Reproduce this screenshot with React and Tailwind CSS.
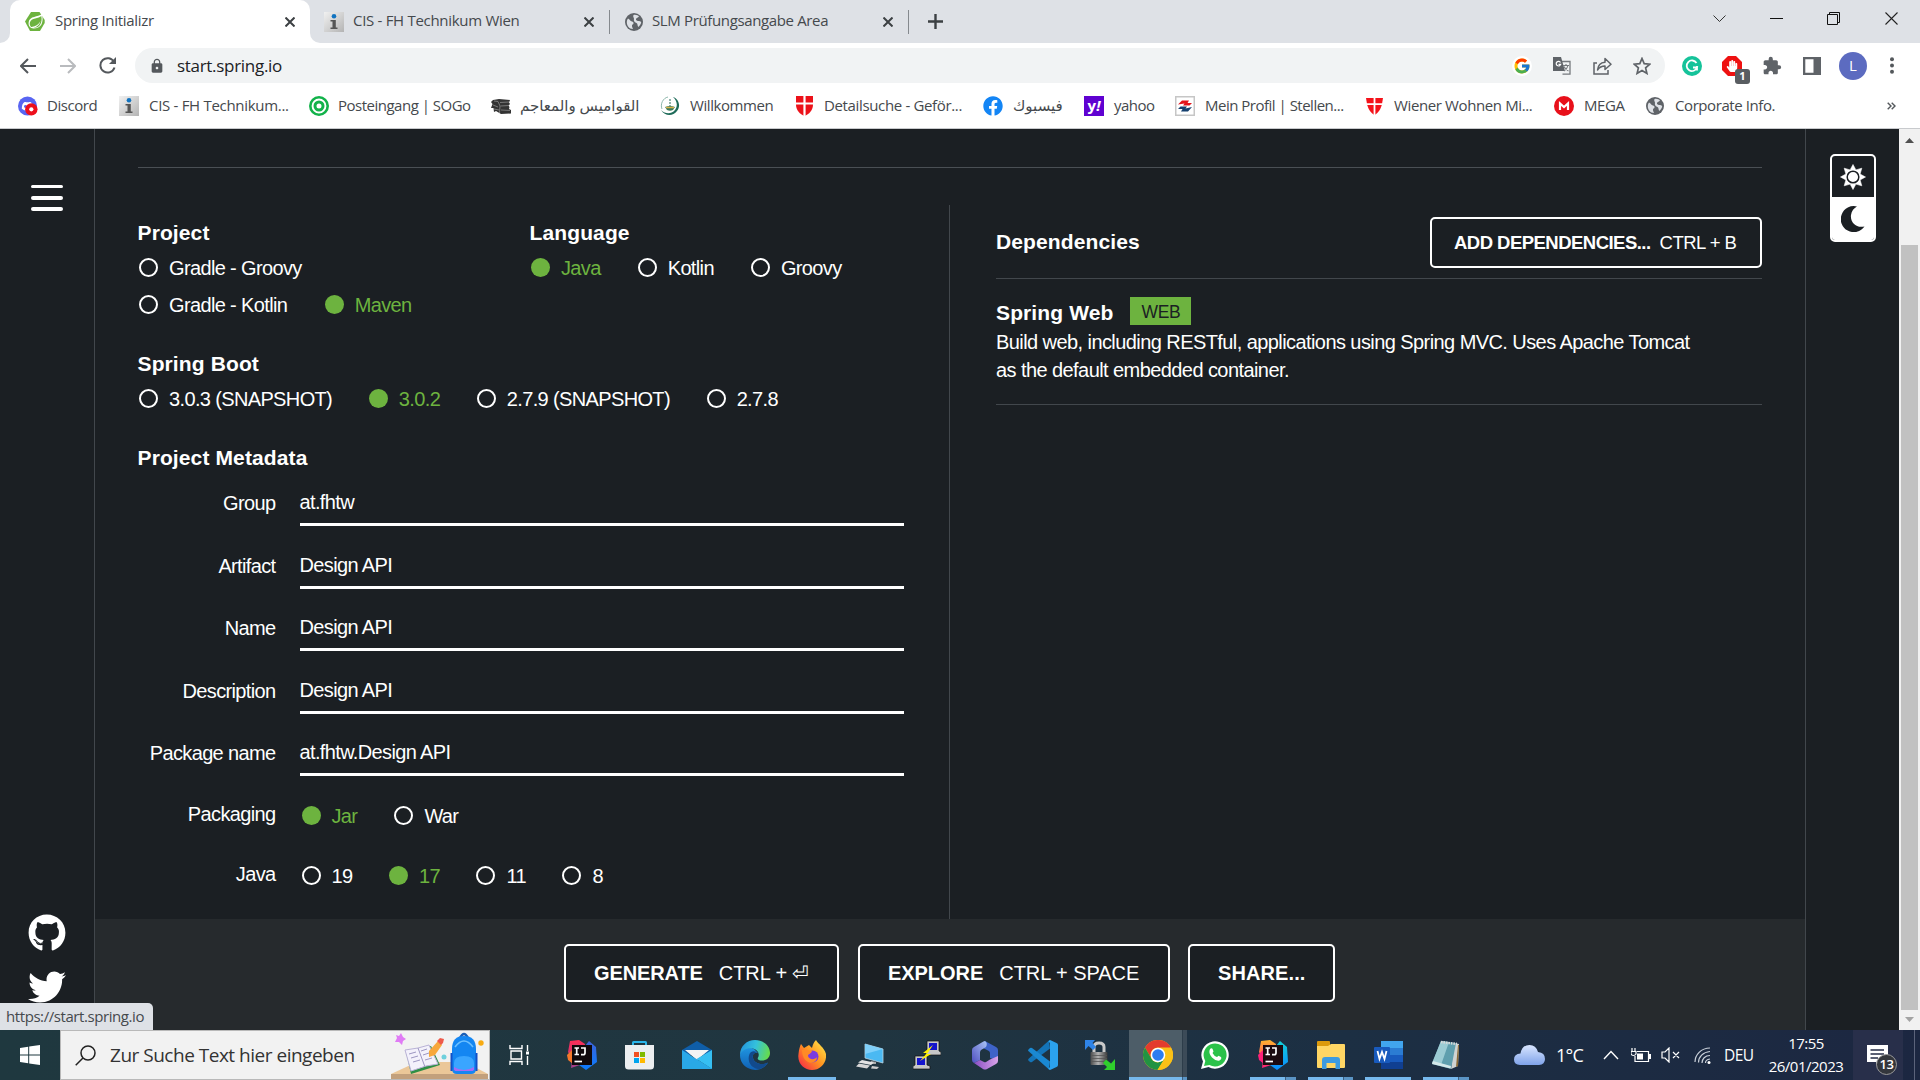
import React from "react";
import { FaGithub, FaTwitter, FaFacebook, FaHandPaper } from "react-icons/fa";
import { FcGoogle } from "react-icons/fc";
import { MdLock, MdExtension } from "react-icons/md";

const UI = "font-['Open_Sans','Noto_Sans','DejaVu_Sans',sans-serif]";

/* ---------- favicons ---------- */
const SpringLogo = () => (
  <svg width="20" height="19" viewBox="0 0 20 19">
    <path d="M6 0H14.500L19.700 8V11L15 19H5L0 9.500Z" fill="#6db33f" />
    <path d="M17 2C13 5 4.500 4 3.700 10C3 13.500 5 16.500 8.500 16.500C16 16.500 19 11 17 2Z" fill="#fff" />
    <path d="M16.300 4C14 6.700 6 5.700 4.900 10.500C4.200 13 6 15 6.500 15C11 14 14 12.500 15.400 9C14.500 13 12 15 8.500 15.700C14 16.200 17.800 11.500 16.300 4Z" fill="#6db33f" />
  </svg>
);
const InfoIcon = () => (
  <svg width="20" height="20" viewBox="0 0 20 20" className="shrink-0">
    <defs>
      <linearGradient id="inf" x1="0" y1="0" x2="1" y2="1">
        <stop offset="0" stopColor="#f1f1f1" />
        <stop offset="1" stopColor="#b4b4b4" />
      </linearGradient>
    </defs>
    <rect width="20" height="20" fill="url(#inf)" />
    <circle cx="10" cy="4.300" r="2.300" fill="#1173c0" />
    <path d="M6.500 8H11.800V15.500H13.500V17H6.500V15.500H8.500V9.500H6.500Z" fill="#555" />
  </svg>
);
const Globe = () => (
  <svg width="18" height="18" viewBox="0 0 18 18" className="shrink-0">
    <circle cx="9" cy="9" r="9" fill="#5f6368" />
    <path d="M3 5.500C5 6.500 5 8 7 8.500C9 9 9 11 7.500 11.500C6.500 12 7 14 8 16C4 16 1.700 12.500 1.800 9C1.900 7.500 2.300 6.500 3 5.500Z" fill="#dee1e6" />
    <path d="M8.500 2C11 1.500 13 2.500 14 3.500C13 5 11.500 4.500 11 6C10.500 7.500 12.500 8 14 8C15.500 8 16 9 16.200 9.500C15.800 12 14 13 13.500 14C12 12.500 13 11 11.500 10C9 9 8.500 7.500 9 6C9.300 4.800 7.500 4 8.500 2Z" fill="#dee1e6" />
  </svg>
);
const DiscordIcon = () => (
  <svg width="21" height="20" viewBox="0 0 21 20">
    <circle cx="10" cy="10" r="10" fill="#5865f2" />
    <path d="M4 13C4 9 5 7 6.500 6C8 5.300 8 6 10 6C12 6 12 5.300 13.500 6C15 7 16 9 16 13L13.500 14.500H6.500Z" fill="#fff" />
    <circle cx="7.800" cy="10.500" r="1.500" fill="#5865f2" />
    <circle cx="14" cy="13.500" r="6.500" fill="#ed0f1c" />
    <circle cx="14" cy="13.500" r="2.200" fill="#fff" />
  </svg>
);
const SogoIcon = () => (
  <svg width="20" height="20" viewBox="0 0 20 20">
    <circle cx="10" cy="10" r="8.700" fill="none" stroke="#12b24a" strokeWidth="2.600" />
    <circle cx="10" cy="10" r="4" fill="none" stroke="#12b24a" strokeWidth="3" />
  </svg>
);
const DictIcon = () => (
  <svg width="20" height="15" viewBox="0 0 20 15">
    <path d="M2 1L8 0L19 1L18 3.500L19 5L17.500 6.500L18.500 8L18 10L20 11V14.500L10 15L5 12L3 13L2.500 9L0 9L1.500 5L0 3Z" fill="#333" />
    <path d="M3 2L7 2.500L9 7L8.500 14M9 3.500L18 3M9.500 7L18 6.500M10 11L19 11.500M2 6L7 8M3 10L8 11" stroke="#8a8a8a" fill="none" strokeWidth=".8" />
  </svg>
);
const WillIcon = () => (
  <svg width="20" height="20" viewBox="0 0 20 20">
    <path d="M13 1C19 3 21 10 17 15C13 20.500 5 20.500 1 14C5 18 11 18.500 14.500 14.500C18 10.500 17.500 5 13 1Z" fill="#1e6b59" />
    <path d="M2 13C0 8 3 2 8 1" stroke="#8db7ab" fill="none" />
    <path d="M5 11Q10 9 15 11L13 14Q10 15.500 7 14Z" fill="#3b7a5c" />
    <path d="M6 11.500H14" stroke="#d8b14a" strokeWidth="1.500" />
    <path d="M10 3V10" stroke="#6c9b90" strokeWidth="1.500" strokeDasharray="2 1" />
  </svg>
);
const ViennaIcon = () => (
  <svg width="17" height="20" viewBox="0 0 17 20">
    <path d="M0 0H17V9C17 14 13 18.500 8.500 20C4 18.500 0 14 0 9Z" fill="#ec1119" />
    <path d="M8.500 0V20M0 7.500H17" stroke="#fff" strokeWidth="2.200" />
  </svg>
);
const ViennaIcon2 = () => (
  <svg width="17" height="17" viewBox="0 0 17 17">
    <path d="M0 0H17L16 6C15 11 12 15 8.500 17C5 15 2 11 1 6Z" fill="#f4121a" />
    <path d="M8.500 0V17M0 6.200H17" stroke="#fff" strokeWidth="1.800" />
  </svg>
);
const AmsIcon = () => (
  <svg width="20" height="20" viewBox="0 0 20 20">
    <rect x=".75" y=".75" width="18.500" height="18.500" fill="#fff" stroke="#c6c6c6" strokeWidth="1.500" />
    <path d="M3 8.500L7 4.500H14L12.500 7H17L14.500 9.500H8L9.500 7.500Z" fill="#e3141b" />
    <path d="M17 11L13 15.500H6L7.500 13H3L5.500 10.500H12L10.500 12.500Z" fill="#15406f" />
  </svg>
);
const MegaIcon = () => (
  <svg width="20" height="20" viewBox="0 0 20 20">
    <circle cx="10" cy="10" r="10" fill="#e8101a" />
    <path d="M6 14V7.500L10 11L14 7.500V14" fill="none" stroke="#fff" strokeWidth="2.200" />
  </svg>
);
const YahooIcon = () => (
  <span className="flex h-5 w-5 items-center justify-center bg-[#5f01d1] pb-0.5 text-[15px] leading-5 font-bold text-white">y<i>!</i></span>
);

/* ---------- browser ---------- */
const CloseX = () => (
  <svg width="10" height="10" viewBox="0 0 10 10">
    <path d="M.5 .5L9.500 9.500M9.500 .5L.5 9.500" stroke="#3c4043" strokeWidth="2" />
  </svg>
);
const tabTxt = "text-[15px] leading-5 whitespace-nowrap text-[#45494d] pb-[3px]";

const TabStrip = () => (
  <div className="flex h-[43px] items-center bg-[#dee1e6]">
    <div className="flex h-[43px] w-2.5 shrink-0 items-end bg-white">
      <div className="h-[43px] w-2.5 rounded-br-[10px] bg-[#dee1e6]" />
    </div>
    <div className="flex h-[43px] w-[300px] shrink-0 items-center rounded-t-[10px] bg-white pr-[15px] pl-[15px]">
      <SpringLogo />
      <span className={`${tabTxt} ml-[10px] flex-1 tracking-[-0.3px]`}>Spring Initializr</span>
      <CloseX />
    </div>
    <div className="flex h-[43px] w-3.5 shrink-0 bg-white">
      <div className="h-[43px] w-3.5 rounded-bl-[10px] bg-[#dee1e6]" />
    </div>
    <div className="flex w-[285px] shrink-0 items-center pr-[15px]">
      <InfoIcon />
      <span className={`${tabTxt} ml-[9px] flex-1 tracking-[-0.3px]`}>CIS - FH Technikum Wien</span>
      <CloseX />
    </div>
    <div className="h-6 w-px bg-[#85898e]" />
    <div className="flex w-[298px] shrink-0 items-center pr-[15px] pl-[15px]">
      <Globe />
      <span className={`${tabTxt} ml-[9px] flex-1 tracking-[-0.36px]`}>SLM Prüfungsangabe Area</span>
      <CloseX />
    </div>
    <div className="h-6 w-px bg-[#85898e]" />
    <svg width="15" height="15" viewBox="0 0 15 15" className="ml-[19px]">
      <path d="M7.500 0V15M0 7.500H15" stroke="#3c4043" strokeWidth="2.400" />
    </svg>
    <div className="flex h-[43px] flex-1 items-start justify-end pt-3 pr-[22px]">
      <svg width="13" height="13" viewBox="0 0 13 13" className="mr-[44px]"><path d="M.5 3.500L6.500 9.500L12.500 3.500" fill="none" stroke="#333" /></svg>
      <svg width="13" height="13" viewBox="0 0 13 13" className="mr-[44px]"><path d="M0 6.500H13" stroke="#111" /></svg>
      <svg width="13" height="13" viewBox="0 0 13 13" className="mr-[45px]"><path d="M.5 2.500H10.500V12.500H.5ZM2.500 2.500V.5H12.500V10.500H10.500" fill="none" stroke="#111" /></svg>
      <svg width="13" height="13" viewBox="0 0 13 13"><path d="M.5 .5L12.500 12.500M12.500 .5L.5 12.500" stroke="#222" strokeWidth="1.100" /></svg>
    </div>
  </div>
);

const Toolbar = () => (
  <div className="flex h-[45px] items-center bg-white pl-5">
    <svg width="16" height="16" viewBox="0 0 16 16"><path d="M16 8H1.500M8 1L1 8L8 15" fill="none" stroke="#54585c" strokeWidth="2" /></svg>
    <svg width="16" height="16" viewBox="0 0 16 16" className="ml-6"><path d="M0 8H14.500M8 1L15 8L8 15" fill="none" stroke="#b9bbbe" strokeWidth="2" /></svg>
    <svg width="17" height="17" viewBox="0 0 17 17" className="ml-[23px]">
      <path d="M15 5A7.200 7.200 0 1 0 15.500 10.500" fill="none" stroke="#54585c" strokeWidth="2" />
      <path d="M17 0V7H10Z" fill="#54585c" />
    </svg>
    <div className="ml-[19px] flex h-[35px] w-[250px] grow items-center rounded-full bg-[#f1f3f4] pr-[14px] pl-[14px]">
      <MdLock className="h-4 w-4 text-[#54585c]" />
      <span className="ml-[12px] flex-1 text-[17px] leading-6 tracking-[-0.3px] text-[#202124]">start.spring.io</span>
      <span className="flex h-5 w-5 items-center justify-center rounded-full bg-white"><FcGoogle className="h-[18px] w-[18px]" /></span>
      <svg width="18" height="18" viewBox="0 0 18 18" className="ml-[21px]">
        <path d="M7 4.500H17V17.200H9.500" fill="none" stroke="#75797d" strokeWidth="1.300" />
        <path d="M0 0H8L12 14H0Z" fill="#5f6368" />
        <path d="M7.500 5.500A2.300 2.300 0 1 0 7.700 7.400H5.500" fill="none" stroke="#fff" strokeWidth="1.200" />
        <path d="M10 8.500H16M13 7V8.500M15 8.500C14.500 11 13 12.500 11 14M11 9.500C12 12 14 13 15.500 14" fill="none" stroke="#75797d" strokeWidth="1.100" />
      </svg>
      <svg width="19" height="18" viewBox="0 0 19 18" className="ml-[22px]">
        <path d="M4 6H1V17H15V13" fill="none" stroke="#5f6368" strokeWidth="1.500" />
        <path d="M4.500 13C5 8 8 5.500 12 5.200V1.500L18 7.200L12 12.500V9C9 9 6.500 10 4.500 13Z" fill="none" stroke="#5f6368" strokeWidth="1.500" strokeLinejoin="round" />
      </svg>
      <svg width="18" height="18" viewBox="0 0 18 18" className="ml-[21px]">
        <path d="M9 1.500L11.200 6.700L16.800 7.200L12.600 10.900L13.900 16.400L9 13.500L4.100 16.400L5.400 10.900L1.200 7.200L6.800 6.700Z" fill="none" stroke="#5f6368" strokeWidth="1.700" />
      </svg>
    </div>
    <div className="flex w-[255px] shrink-0 items-center pl-[17px]">
      <svg width="20" height="20" viewBox="0 0 20 20">
        <circle cx="10" cy="10" r="10" fill="#15c39a" />
        <path d="M14.500 7A5.300 5.300 0 1 0 15 11.500H11M15 10V14.500" fill="none" stroke="#fff" strokeWidth="1.800" />
      </svg>
      <span className="relative ml-5 flex h-5 w-5 items-center justify-center">
        <svg width="20" height="20" viewBox="0 0 20 20"><path d="M6 0H14L20 6V14L14 20H6L0 14V6Z" fill="#ee1111" /></svg>
        <FaHandPaper className="absolute top-1 left-[4px] h-3 w-3 text-white" />
        <span className="absolute top-[13px] left-[13px] flex h-[15px] w-[15px] items-center justify-center rounded-[3px] bg-[#595d61] text-[11px] leading-3 font-bold text-white">1</span>
      </span>
      <MdExtension className="ml-5 h-5 w-5 text-[#5f6368]" />
      <svg width="18" height="18" viewBox="0 0 18 18" className="ml-[21px]">
        <path d="M0 0H18V18H0ZM2.300 2.300V15.700H10.500V2.300Z" fillRule="evenodd" fill="#5f6368" />
      </svg>
      <span className="ml-[18px] flex h-7 w-7 items-center justify-center rounded-full bg-[#5c6bc0] text-[15px] text-white">L</span>
      <svg width="4" height="17" viewBox="0 0 4 17" className="ml-[23px]">
        <circle cx="2" cy="2.200" r="2" fill="#54585c" /><circle cx="2" cy="8.500" r="2" fill="#54585c" /><circle cx="2" cy="14.800" r="2" fill="#54585c" />
      </svg>
    </div>
  </div>
);

const bookmarks = [
  { icon: <DiscordIcon />, label: "Discord", w: "w-[101px]", t: "tracking-[-0.45px] ml-[9px]" },
  { icon: <InfoIcon />, label: "CIS - FH Technikum...", w: "w-[190px]", t: "tracking-[-0.3px] ml-[10px]" },
  { icon: <SogoIcon />, label: "Posteingang | SOGo", w: "w-[182px]", t: "tracking-[-0.5px] ml-[9px]" },
  { icon: <DictIcon />, label: "القواميس والمعاجم", w: "w-[169px]", t: "ml-[9px]" },
  { icon: <WillIcon />, label: "Willkommen", w: "w-[134px]", t: "tracking-[-0.42px] ml-[10px]" },
  { icon: <ViennaIcon />, label: "Detailsuche - Geför...", w: "w-[189px]", t: "tracking-[-0.35px] ml-[10px]" },
  { icon: <FaFacebook className="h-5 w-5 text-[#1385f5]" />, label: "فيسبوك", w: "w-[101px]", t: "ml-[10px]" },
  { icon: <YahooIcon />, label: "yahoo", w: "w-[91px]", t: "tracking-[-0.5px] ml-[10px]" },
  { icon: <AmsIcon />, label: "Mein Profil | Stellen...", w: "w-[189px]", t: "tracking-[-0.5px] ml-[10px]" },
  { icon: <ViennaIcon2 />, label: "Wiener Wohnen Mi...", w: "w-[190px]", t: "tracking-[-0.38px] ml-[10px]" },
  { icon: <MegaIcon />, label: "MEGA", w: "w-[91px]", t: "tracking-[-0.45px] ml-[10px]" },
  { icon: <Globe />, label: "Corporate Info.", w: "w-[242px]", t: "tracking-[-0.42px] ml-[10px]" },
];
const Bookmarks = () => (
  <div className="flex h-10 items-center bg-white pb-1 pl-[18px]">
    {bookmarks.map((b) => (
      <div key={b.label} className={`flex shrink-0 items-center ${b.w}`}>
        <span className="flex w-5 shrink-0 justify-center">{b.icon}</span>
        <span className={`pb-0.5 text-[15px] leading-5 whitespace-nowrap text-[#45494d] ${b.t}`}>{b.label}</span>
      </div>
    ))}
    <svg width="9" height="8" viewBox="0 0 9 8"><path d="M.7 .7L4 4L.7 7.300M4.700 .7L8 4L4.700 7.300" fill="none" stroke="#54585c" strokeWidth="1.400" /></svg>
  </div>
);

/* ---------- page ---------- */
const body = "text-[20px] leading-6 tracking-[-0.64px] whitespace-nowrap";

const Radio = ({ label, on }) => (
  <div className="flex h-[37px] items-center">
    <span className={on ? "h-[19px] w-[19px] rounded-full bg-[#6db33f]" : "h-[19px] w-[19px] rounded-full border-2 border-white"} />
    <span className={`${body} ml-[11px] ${on ? "text-[#6db33f]" : "text-white"}`}>{label}</span>
  </div>
);
const Heading = ({ children }) => <h3 className="h-[26px] text-[21px] leading-[26px] font-bold tracking-[0.12px] whitespace-nowrap">{children}</h3>;

const Field = ({ label, value }) => (
  <div className="flex h-[62.5px]">
    <span className={`${body} mt-px w-[138px] text-right`}>{label}</span>
    <div className="ml-[24px] h-9 w-[604px] border-b-[3px] border-white">
      <span className={`${body} block tracking-[-0.6px]`}>{value}</span>
    </div>
  </div>
);

const Btn = ({ main, keys, className, keyClass }) => (
  <div className={`flex items-center rounded-[5px] border-2 border-white bg-[#1b1f23] whitespace-nowrap ${className}`}>
    <span className="font-bold">{main}</span>
    {keys && <span className={keyClass}>{keys}</span>}
  </div>
);

const Page = () => (
  <div className="flex h-[901px] bg-[#1b1f23] font-['Liberation_Sans',Arial,sans-serif] text-white">
    <aside className="relative flex w-[95px] shrink-0 flex-col items-center justify-between border-r border-[#42474c] pt-14">
      <div className="flex flex-col">
        <span className="h-[3px] w-8 rounded-sm bg-white" />
        <span className="mt-2 h-1 w-8 rounded-sm bg-white" />
        <span className="mt-[7px] h-1 w-8 rounded-sm bg-white" />
      </div>
      <div className="flex h-[116px] flex-col items-center gap-4">
        <FaGithub className="h-[38px] w-[38px]" />
        <FaTwitter className="h-[38px] w-[38px]" />
      </div>
      <div className={`absolute bottom-0 left-0 flex h-[27px] w-[153px] items-center rounded-tr-[5px] bg-[#dee1e6] pl-[6px] text-[15px] tracking-[-0.42px] text-[#45494d] ${UI}`}>https://start.spring.io</div>
    </aside>

    <main className="flex w-[1710px] shrink-0 flex-col">
      <div className="mx-[43px] h-[39px] shrink-0 border-b border-[#4a4f54]" />
      <div className="mt-[37px] flex h-[714px] shrink-0">
        <section className="flex w-[855px] flex-col border-r border-[#42474c] pt-[15px] pl-[42.500px]">
          <div className="flex">
            <div className="w-[392px]">
              <Heading>Project</Heading>
              <div className="mt-[3px] ml-[1.500px]">
                <Radio label="Gradle - Groovy" />
                <div className="flex gap-[37.500px]"><Radio label="Gradle - Kotlin" /><Radio label="Maven" on /></div>
              </div>
            </div>
            <div>
              <Heading>Language</Heading>
              <div className="mt-[3px] ml-[1.500px] flex gap-[37px]"><Radio label="Java" on /><Radio label="Kotlin" /><Radio label="Groovy" /></div>
            </div>
          </div>
          <div className="mt-7">
            <Heading>Spring Boot</Heading>
            <div className="mt-[3px] ml-[1.500px] flex gap-[36.700px]"><Radio label="3.0.3 (SNAPSHOT)" /><Radio label="3.0.2" on /><Radio label="2.7.9 (SNAPSHOT)" /><Radio label="2.7.8" /></div>
          </div>
          <div className="mt-7">
            <Heading>Project Metadata</Heading>
            <div className="mt-[19px]">
              <Field label="Group" value="at.fhtw" />
              <Field label="Artifact" value="Design API" />
              <Field label="Name" value="Design API" />
              <Field label="Description" value="Design API" />
              <Field label="Package name" value="at.fhtw.Design API" />
            </div>
            <div className="-mt-[5.500px] flex h-[60px] items-start">
              <span className={`${body} mt-[5px] w-[138px] text-right`}>Packaging</span>
              <div className="ml-[26px] flex gap-[37px]"><Radio label="Jar" on /><Radio label="War" /></div>
            </div>
            <div className="flex h-[60px] items-start">
              <span className={`${body} mt-[5px] w-[138px] text-right`}>Java</span>
              <div className="ml-[26px] flex gap-[36.500px]"><Radio label="19" /><Radio label="17" on /><Radio label="11" /><Radio label="8" /></div>
            </div>
          </div>
        </section>
        <section className="flex w-[812px] flex-col pl-[46px]">
          <div className="flex h-[74px] shrink-0 items-center justify-between border-b border-[#42474c] pt-px">
            <Heading>Dependencies</Heading>
            <Btn main="ADD DEPENDENCIES..." keys="CTRL + B" className="h-[51px] w-[332px] px-[22px] pt-px text-[18.500px] tracking-[-0.53px]" keyClass="ml-[9px]" />
          </div>
          <div className="h-[126px] shrink-0 border-b border-[#42474c] pt-[18px]">
            <div className="flex h-[31px] items-center">
              <Heading>Spring Web</Heading>
              <span className="mb-1 ml-[17px] flex h-7 w-[61px] items-center justify-center bg-[#6db33f] pt-[4px] text-[17.500px] tracking-[-0.3px] text-[#1b1f23]">WEB</span>
            </div>
            <p className="text-[20px] leading-7 tracking-[-0.575px] whitespace-nowrap">
              Build web, including RESTful, applications using Spring MVC. Uses Apache Tomcat<br />as the default embedded container.
            </p>
          </div>
        </section>
      </div>
      <footer className="flex h-[111px] items-start bg-[#262a2d] pt-[25px] pl-[469px] text-[20px]">
        <Btn main="GENERATE" keys="CTRL + ⏎" className="h-[58px] w-[275px] pl-7 tracking-[-0.1px]" keyClass="ml-4" />
        <Btn main="EXPLORE" keys="CTRL + SPACE" className="ml-[19px] h-[58px] w-[312px] pl-7 tracking-[-0.05px]" keyClass="ml-4" />
        <Btn main="SHARE..." className="ml-[18px] h-[58px] w-[147px] pl-7 tracking-[0.1px]" />
      </footer>
    </main>

    <aside className="flex flex-1 flex-col items-start border-l border-[#42474c] pt-[25px] pl-6">
      <div className="flex h-[88px] w-[46px] flex-col overflow-hidden rounded-[5px] border-2 border-white bg-[#1b1f23]">
        <div className="flex h-[41px] items-center justify-center">
          <svg width="26" height="26" viewBox="0 0 26 26">
            <path d="M13 0.500L15.900 5.900L21.800 4.200L20.100 10.100L25.500 13L20.100 15.900L21.800 21.800L15.900 20.100L13 25.500L10.100 20.100L4.200 21.800L5.900 15.900L0.500 13L5.900 10.100L4.200 4.200L10.100 5.900Z" fill="#fff" stroke="#fff" strokeWidth=".6" strokeLinejoin="round" />
            <circle cx="13" cy="13" r="5.800" fill="#fff" stroke="#1b1f23" strokeWidth="1.500" />
          </svg>
        </div>
        <div className="flex flex-1 items-center justify-center bg-white">
          <svg width="24" height="26" viewBox="0 0 24 26"><path d="M16 0.500A13 13 0 1 0 23.500 20.500C15 22.500 9 16 10 9C10.500 5 13 2 16 0.500Z" fill="#1b1f23" /></svg>
        </div>
      </div>
    </aside>

    <div className="flex w-[21px] shrink-0 flex-col items-center bg-[#f1f1f1]">
      <svg width="9" height="5" viewBox="0 0 9 5" className="mt-[9px]"><path d="M4.500 0L9 5H0Z" fill="#505050" /></svg>
      <div className="mt-[102px] h-[765px] w-[17px] bg-[#c1c1c1]" />
      <svg width="9" height="5" viewBox="0 0 9 5" className="mt-[7px]"><path d="M4.500 5L9 0H0Z" fill="#a3a3a3" /></svg>
    </div>
  </div>
);

/* ---------- taskbar ---------- */
const IJ = ({ id, left, right, accent, dark }) => (
  <svg width="30" height="30" viewBox="0 0 30 30">
    <defs>
      <linearGradient id={`${id}a`} x1="0" y1="0" x2="0" y2="1"><stop offset="0" stopColor={left[0]} /><stop offset="1" stopColor={left[1]} /></linearGradient>
      <linearGradient id={`${id}b`} x1="0" y1="0" x2="0" y2="1"><stop offset="0" stopColor={right[0]} /><stop offset="1" stopColor={right[1]} /></linearGradient>
    </defs>
    <path d="M3 1L12 0L18 4L16 24L4 28L5 20L1 12Z" fill={`url(#${id}a)`} />
    <path d="M0 15L6 9V24L1 20Z" fill={accent} />
    <path d="M18 6L22 1L29 7L30 22L19 30L12 25Z" fill={`url(#${id}b)`} />
    <rect x="5" y="5" width="20" height="20" fill={dark} />
    <path d="M7.500 8H12M9.700 8V14.500M7.500 14.500H12M14 8H18V13Q18 14.700 16 14.700H14" fill="none" stroke="#fff" strokeWidth="1.700" />
    <path d="M7.500 21.500H15" stroke="#fff" strokeWidth="1.700" />
  </svg>
);
const Store = () => (
  <svg width="29" height="30" viewBox="0 0 29 30">
    <path d="M8 6V2.500Q8 2 8.500 2H20.500Q21 2 21 2.500V6" fill="none" stroke="#2bb5ea" strokeWidth="2" />
    <path d="M0 5H29V26Q29 29.500 25.500 29.500H3.500Q0 29.500 0 26Z" fill="#eceef0" />
    <path d="M9 12H14V17H9Z" fill="#f25022" /><path d="M15 12H20V17H15Z" fill="#7fba00" />
    <path d="M9 18H14V23H9Z" fill="#00a4ef" /><path d="M15 18H20V23H15Z" fill="#ffb900" />
  </svg>
);
const Mail = () => (
  <svg width="30" height="28" viewBox="0 0 30 28">
    <path d="M0 9L15 0L30 9V14H0Z" fill="#0f5ea8" />
    <path d="M3 9H27L15 19Z" fill="#f4f4f4" />
    <path d="M0 9L30 28H0Z" fill="#2aa8e8" />
    <path d="M30 9V28L14.500 18Z" fill="#36bff2" />
    <path d="M0 28L15 18.500L30 28Z" fill="#29a9e6" />
  </svg>
);
const Edge = () => (
  <svg width="30" height="30" viewBox="0 0 30 30">
    <defs>
      <linearGradient id="eg" x1="0" y1=".3" x2="1" y2=".5"><stop offset="0" stopColor="#2293dd" /><stop offset=".5" stopColor="#34c1dc" /><stop offset="1" stopColor="#66dc4c" /></linearGradient>
      <linearGradient id="eb" x1="0" y1="0" x2="0" y2="1"><stop offset="0" stopColor="#1f94e0" /><stop offset="1" stopColor="#1060b4" /></linearGradient>
    </defs>
    <path d="M0 15C1 9 8 6 14 9L18 13C14 12 12 15 13 18C14 23 21 26 28 22.500C23 31 14 31 9 28.500C3 26 0 21 0 15Z" fill="url(#eb)" />
    <path d="M9.500 14C7 20 10 28 18 29C22 29 26 26 28 22.500C21 26 14 23 13 18C12 15 14 12.500 17 12.500C14 10.500 11 11 9.500 14Z" fill="#124a8c" />
    <path d="M0 15C0 6 7 0 15 0C24 0 30 6 30 13C30 18 26 20.500 22 20.500C18.500 20.500 17 19 18 17.500C20 14 18 10 13 8.500C7 7.500 2 10 0 15Z" fill="url(#eg)" />
  </svg>
);
const Firefox = () => (
  <svg width="28" height="30" viewBox="0 0 28 30">
    <defs><linearGradient id="ff" x1="1" y1="0" x2="0" y2="1"><stop offset="0" stopColor="#fff14f" /><stop offset=".5" stopColor="#ff9420" /><stop offset="1" stopColor="#f5194d" /></linearGradient></defs>
    <path d="M18 0C20 4 26 7 28 14C29 23 22 30 14 30C6 30 -1 23 0.500 14C1 9 2 6 3 4L6 8L11 5L14 8C15 4 16 2 18 0Z" fill="url(#ff)" />
    <circle cx="14.500" cy="16.500" r="6" fill="#7b3be0" />
    <path d="M4 10C8 9 11 11 14 11C13 14 10 14 10 16C11 20 17 20 19 17C19 22 13 24 10 22C6 20 4 15 4 10Z" fill="#ff8a26" />
  </svg>
);
const RemotePc = () => (
  <svg width="28" height="28" viewBox="0 0 28 28">
    <path d="M9 3L27 8V22L9 17Z" fill="#4bb9f2" stroke="#b9d4e2" strokeWidth=".8" />
    <path d="M9 3L27 8L9 13Z" fill="#7fd0fa" />
    <path d="M15 20L20 21V23H14Z" fill="#aaa" />
    <path d="M6 19L18 21.500L15 24L2 21.500Z" fill="#e4e4e4" /><path d="M3 22.500L14 24.500L11 27.500L0 25.500Z" fill="#d6d6d6" /><path d="M16 25L23 26L21 28L15 27.500Z" fill="#ccc" />
  </svg>
);
const Putty = () => (
  <svg width="28" height="30" viewBox="0 0 28 30">
    <path d="M14 1H26V11L28 12V15H12L14 12Z" fill="#c7c7c7" stroke="#111" strokeWidth=".7" /><rect x="16" y="3" width="8" height="7" fill="#1414cc" />
    <path d="M2 16H14V25L17 26V29H0V26L2 25Z" fill="#c7c7c7" stroke="#111" strokeWidth=".7" /><rect x="4" y="18" width="8" height="7" fill="#1414cc" />
    <path d="M20 5L10 13H14L7 21L18 14H14Z" fill="#fff200" />
  </svg>
);
const Office = () => (
  <svg width="26" height="29" viewBox="0 0 26 29">
    <defs>
      <linearGradient id="of" x1="0" y1="1" x2="1" y2="0"><stop offset="0" stopColor="#4f4fc0" /><stop offset="1" stopColor="#a9c4f5" /></linearGradient>
      <linearGradient id="og" x1="0" y1="0" x2="1" y2="0"><stop offset="0" stopColor="#8a4fc4" /><stop offset="1" stopColor="#d9a3ea" /></linearGradient>
    </defs>
    <path d="M13 0L24 6Q26 7 26 9V20L18 17V12Q18 10.500 16.500 9.700L11 7Z" fill="#3e63c8" />
    <path d="M13 0Q16 2 14 6L9 9Q8 10 8 11.500V19L2 22Q0 21 0 19V9Q0 7 2 6L11 .7Q12 0 13 0Z" fill="url(#of)" />
    <path d="M2 22L8 19L12 21Q13 21.500 14 21L18 18.500L26 15V20Q26 22 24 23L15 28Q13 29 11 28Z" fill="url(#og)" />
  </svg>
);
const VSCode = () => (
  <svg width="30" height="30" viewBox="0 0 30 30">
    <path d="M22 8.500L4 22Q3 22.700 2 22L.5 20.500Q-.3 19.500 .6 18.700L21 .6Z" fill="#1474b8" />
    <path d="M22 21.500L4 8Q3 7.300 2 8L.5 9.500Q-.3 10.500 .6 11.300L21 29.400Z" fill="#1a88d2" />
    <path d="M22 0L28.500 3Q30 3.700 30 5V25Q30 26.300 28.500 27L22 30Q20.500 29.500 20.500 28.500L22 27V3L20.500 1.500Q21 .3 22 0Z" fill="#2ba2ee" />
  </svg>
);
const WinScp = () => (
  <svg width="30" height="30" viewBox="0 0 30 30">
    <defs><linearGradient id="ws" x1="0" x2="1"><stop offset="0" stopColor="#4a4a4a" /><stop offset=".45" stopColor="#b0b0b0" /><stop offset="1" stopColor="#3a3a3a" /></linearGradient></defs>
    <path d="M9 13V7Q9 3 14 3Q19 3 19 7V13" fill="none" stroke="#c9c9c9" strokeWidth="3" />
    <rect x="5.500" y="12" width="17" height="13" rx="1" fill="url(#ws)" /><path d="M6 15.500H22M6 18.500H22M6 21.500H22" stroke="#555" strokeWidth=".8" />
    <path d="M0 0H10L7.500 3L11 7L8 10L3.500 6L0 10Z" fill="#2f84e8" /><path d="M30 30H19L22 27L18 23L21 19.500L26 23.500L30 19Z" fill="#2fcf2c" />
  </svg>
);
const Chrome = () => (
  <svg width="30" height="30" viewBox="0 0 30 30">
    <circle cx="15" cy="15" r="15" fill="#fbc116" />
    <path d="M2 7.500A15 15 0 0 1 28 7.500H15A7.500 7.500 0 0 0 8.500 18.700Z" fill="#e33b2e" />
    <path d="M2 7.500L8.500 18.700A7.500 7.500 0 0 0 15 22.500L21.500 18.700L14.500 30A15 15 0 0 1 2 7.500Z" fill="#229342" />
    <path d="M14.500 30L21.500 18.700A7.500 7.500 0 0 0 21.500 11.200L28 7.500A15 15 0 0 1 14.500 30Z" fill="#fbc116" />
    <circle cx="15" cy="15" r="7.300" fill="#fff" /><circle cx="15" cy="15" r="5.800" fill="#2d7df0" />
  </svg>
);
const WhatsApp = () => (
  <svg width="28" height="28" viewBox="0 0 28 28">
    <path d="M0 28L2 20.500A13.700 13.700 0 1 1 7.500 26Z" fill="#fff" />
    <path d="M3 25L4.300 20A11.500 11.500 0 1 1 8.500 24Z" fill="#2bc24a" />
    <path d="M9 8Q11 6.500 11.800 8.500L12.500 10.500L11.500 12Q13 15 16 16L17.500 14.700L20 16Q21 18 18.500 19.500Q15 20.500 11 16.500Q7 12 9 8Z" fill="#fff" />
  </svg>
);
const Folder = () => (
  <svg width="28" height="28" viewBox="0 0 28 28">
    <path d="M0 1Q0 0 1 0H12Q13 0 13 1V8H0Z" fill="#dc9a0c" /><path d="M0 5H11L14 3H27Q28 3 28 4V26Q28 27 27 27H1Q0 27 0 26Z" fill="#ffd664" />
    <path d="M5 28V19Q5 16 8 16H20Q23 16 23 19V28H18.500V22H9.500V28Z" fill="#3d9be0" />
  </svg>
);
const Word = () => (
  <svg width="29" height="30" viewBox="0 0 29 30">
    <path d="M7 1H29V8H7Z" fill="#41a5ee" /><path d="M7 8H29V15H7Z" fill="#2b7cd3" /><path d="M7 15H29V22H7Z" fill="#185abd" /><path d="M7 22H29V29H7Z" fill="#103f91" />
    <rect y="7" width="16" height="16" rx="1" fill="#185abd" />
    <path d="M3.500 11L5.500 19L8 12L10.500 19L12.500 11" fill="none" stroke="#fff" strokeWidth="1.800" />
  </svg>
);
const Notepad = () => (
  <svg width="28" height="30" viewBox="0 0 28 30">
    <path d="M22 3L27 4L26 26L19 29Z" fill="#cfd3d2" /><path d="M26 5L27 5L26 26L24 27Z" fill="#8b6a35" />
    <path d="M9 1L24 3L19 29L0 24Z" fill="#5f9fae" /><path d="M9 1L17 2L9 25L0 23Z" fill="#9cccd4" /><path d="M1 21L19 26L18.500 28.500L0 24Z" fill="#d4e8ea" /><path d="M9 2L25 4" stroke="#d9d9d9" strokeWidth="2.500" strokeDasharray="1.500 1" />
  </svg>
);

const stackedBar = "mx-[6px] bg-[linear-gradient(90deg,#76b9ed_77%,#3c5f80_77%,#3c5f80_79%,#5a94c4_79%)]";
const apps = [
  { i: <IJ id="ij1" left={["#ff2d55", "#a0408c"]} right={["#3c62d8", "#0a7cff"]} accent="#f5772a" dark="#10090c" /> },
  { i: <Store /> }, { i: <Mail /> }, { i: <Edge /> },
  { i: <Firefox />, bar: "mx-[5px] bg-[#76b9ed]" },
  { i: <RemotePc /> }, { i: <Putty /> }, { i: <Office /> }, { i: <VSCode /> }, { i: <WinScp /> },
  { i: <Chrome />, bar: "bg-[linear-gradient(90deg,#76b9ed_91%,#3c5f80_91%,#3c5f80_93%,#5a94c4_93%)]", active: true },
  { i: <WhatsApp /> },
  { i: <IJ id="ij2" left={["#ffb52e", "#fe2078"]} right={["#14d0d8", "#0a8cff"]} accent="#fe2078" dark="#1c0b10" />, bar: stackedBar },
  { i: <Folder />, bar: stackedBar },
  { i: <Word />, bar: "mx-[6px] bg-[#76b9ed]" },
  { i: <Notepad />, bar: stackedBar },
];

const SchoolArt = () => (
  <svg width="98" height="48" viewBox="0 0 98 48">
    <path d="M0 43L26 31H74L97 43Z" fill="#ebc798" /><path d="M0 43H97V48H0Z" fill="#c2a07c" />
    <path d="M10 2L12 6L15 8L12 10L11 14L8 11L4 11L6 7L5 4L8 5Z" fill="#e07bf5" />
    <path d="M15 21L40 15L49 34L20 43Z" fill="#2f8f46" /><path d="M14 19L27 17L38 14L47 33L35 35L20 40Z" fill="#f3f1fb" stroke="#b9b2d6" />
    <path d="M27 17L34 36M18 23L25 21M20 27L27 25M22 31L29 29M30 20L36 18M32 24L38 22M34 29L41 27" stroke="#9d97c2" />
    <path d="M38 20L47 10L51 14L44 24L38 26Z" fill="#f7a83b" /><path d="M46 10L49 7L53 8L52 12L50 14Z" fill="#ee5a4b" />
    <circle cx="53" cy="26" r="2.500" fill="#6ed0dd" /><circle cx="90" cy="12" r="2.700" fill="#f8ab12" />
    <path d="M69 7Q73 -1 77 7" stroke="#1a5fb8" strokeWidth="2.500" fill="none" />
    <path d="M61 18Q61 5 73 5Q85 5 85 18V38Q85 43 80 43H66Q61 43 61 38Z" fill="#1486f2" />
    <path d="M63 32Q63 25 73 25Q83 25 83 32V37Q83 40 80 40H66Q63 40 63 37Z" fill="#3aa5ff" />
    <path d="M63 36Q73 42 83 36V38Q83 40 80 40H66Q63 40 63 38Z" fill="#a56cf5" />
    <path d="M64 16Q73 4 82 16" stroke="#6cc0ff" strokeWidth="1.500" fill="none" /><path d="M60.500 22V40M85.500 22V40" stroke="#1250c8" strokeWidth="2" />
  </svg>
);

const Taskbar = () => (
  <div className="flex h-[50px] bg-[linear-gradient(90deg,#1f383f_0%,#203540_45%,#1c2f43_70%,#1c2741_100%)] text-white">
    <div className="flex w-[60px] shrink-0 items-center justify-center">
      <svg width="20" height="20" viewBox="0 0 20 20"><path d="M0 2.900L8.200 1.700V9.600H0ZM9.200 1.500L20 0V9.600H9.200ZM0 10.400H8.200V18.300L0 17.100ZM9.200 10.400H20V20L9.200 18.500Z" fill="#fff" /></svg>
    </div>
    <div className="flex w-[430px] shrink-0 items-center border border-[#b9b9b9] bg-[#f2f2f2] pl-[14px]">
      <svg width="21" height="21" viewBox="0 0 21 21"><circle cx="13" cy="8" r="7" fill="none" stroke="#222" strokeWidth="1.500" /><path d="M8 13L.7 20.300" stroke="#222" strokeWidth="1.500" /></svg>
      <span className="ml-[14px] flex-1 text-[19px] leading-6 tracking-[-0.49px] whitespace-nowrap text-[#333]">Zur Suche Text hier eingeben</span>
      <SchoolArt />
    </div>
    <div className="mr-[5px] flex w-[58px] shrink-0 items-center justify-center">
      <svg width="21" height="20" viewBox="0 0 21 20"><path d="M1 0V3.500H13V0M2 6H12.500V14H2ZM1 20V16.500H13V20M18.500 0V6M18.500 11V20" fill="none" stroke="#fff" strokeWidth="1.400" /><path d="M17 6.500H20V9.500H17Z" fill="#fff" /></svg>
    </div>
    {apps.map((a, n) => (
      <div key={n} className={`flex w-[57.6px] shrink-0 flex-col ${a.active ? "bg-[linear-gradient(90deg,#4d5d68_91%,#2d3d4a_91%,#2d3d4a_93%,#3c4b58_93%)]" : ""}`}>
        <div className="flex h-[47px] items-center justify-center pt-[3px]">{a.i}</div>
        {a.bar && <div className={`h-[3px] ${a.bar}`} />}
      </div>
    ))}
    <div className="ml-[39.500px] flex flex-1 items-center">
      <svg width="31" height="22" viewBox="0 0 31 22" className="shrink-0">
        <defs><linearGradient id="cl" x1="0" y1="0" x2="0" y2="1"><stop offset="0" stopColor="#d9e6ff" /><stop offset="1" stopColor="#7fa3ea" /></linearGradient></defs>
        <path d="M6 21Q0 20.500 0 15.500Q0 10 6.500 9.500Q8 1 15.500 1Q22 1 24 8Q31 8.500 31 15Q31 20.500 25 21Z" fill="url(#cl)" />
      </svg>
      <span className="ml-[11px] w-[47px] shrink-0 pt-px text-[18px] tracking-[-0.7px] whitespace-nowrap">1°C</span>
      <svg width="16" height="10" viewBox="0 0 16 10" className="shrink-0"><path d="M1 9L8 1.500L15 9" fill="none" stroke="#fff" strokeWidth="1.400" /></svg>
      <svg width="20" height="15" viewBox="0 0 20 15" className="ml-3 shrink-0"><path d="M6 3.500H17.500V13.500H4V8M1 0V3M4 0V3M0 3.500H5V6Q4 7.500 2.500 7.500Q1 7.500 0 6Z" fill="none" stroke="#fff" strokeWidth="1.200" /><path d="M6 5.500H12V11.500H6Z" fill="#fff" /><path d="M18 6H20V11H18Z" fill="#fff" /></svg>
      <svg width="19" height="16" viewBox="0 0 19 16" className="ml-[10px] shrink-0"><path d="M1 5H4L8 1V15L4 11H1ZM12 5L18 11M18 5L12 11" fill="none" stroke="#fff" strokeWidth="1.200" /></svg>
      <svg width="17" height="17" viewBox="0 0 17 17" className="ml-[14px] shrink-0"><path d="M1 15C1 8 7 1 16 1M4.500 15.500C4.500 10 9 5 16 4.500M8 16C8 12 11 8.500 16 8.500M11.500 16Q11.500 12.500 16 12" fill="none" stroke="#ccd3dc" strokeWidth="1.200" /><circle cx="15" cy="15.500" r="1.500" fill="#fff" /></svg>
      <span className="ml-[13px] w-[40px] shrink-0 pt-px text-[15.500px] tracking-[-0.6px]">DEU</span>
      <div className="flex w-[84px] shrink-0 flex-col items-center text-[15px] leading-[23px] tracking-[-0.5px]"><span>17:55</span><span>26/01/2023</span></div>
      <div className="relative ml-[5px] flex h-[50px] w-[50px] shrink-0 items-center bg-[#282f4a] pl-[14px]">
        <svg width="21" height="20" viewBox="0 0 21 20"><path d="M0 0H21V17H14L9 20V17H0Z" fill="#fff" /><path d="M3.500 5H17M3.500 9H17M3.500 13H11" stroke="#232b45" strokeWidth="1.400" /></svg>
        <span className="absolute top-6 left-[23px] flex h-[21px] w-[21px] items-center justify-center rounded-full border border-[#9a9a9a] bg-[#33363c] text-[13px] font-semibold tracking-[-0.5px]">13</span>
      </div>
    </div>
    <div className="mr-[5px] w-px shrink-0 bg-[#5b637a]" />
  </div>
);

export default function App() {
  return (
    <div className={`flex h-[1080px] w-[1920px] flex-col overflow-hidden bg-white ${UI}`}>
      <TabStrip />
      <Toolbar />
      <Bookmarks />
      <div className="h-px bg-[#c8cacd]" />
      <Page />
      <Taskbar />
    </div>
  );
}
